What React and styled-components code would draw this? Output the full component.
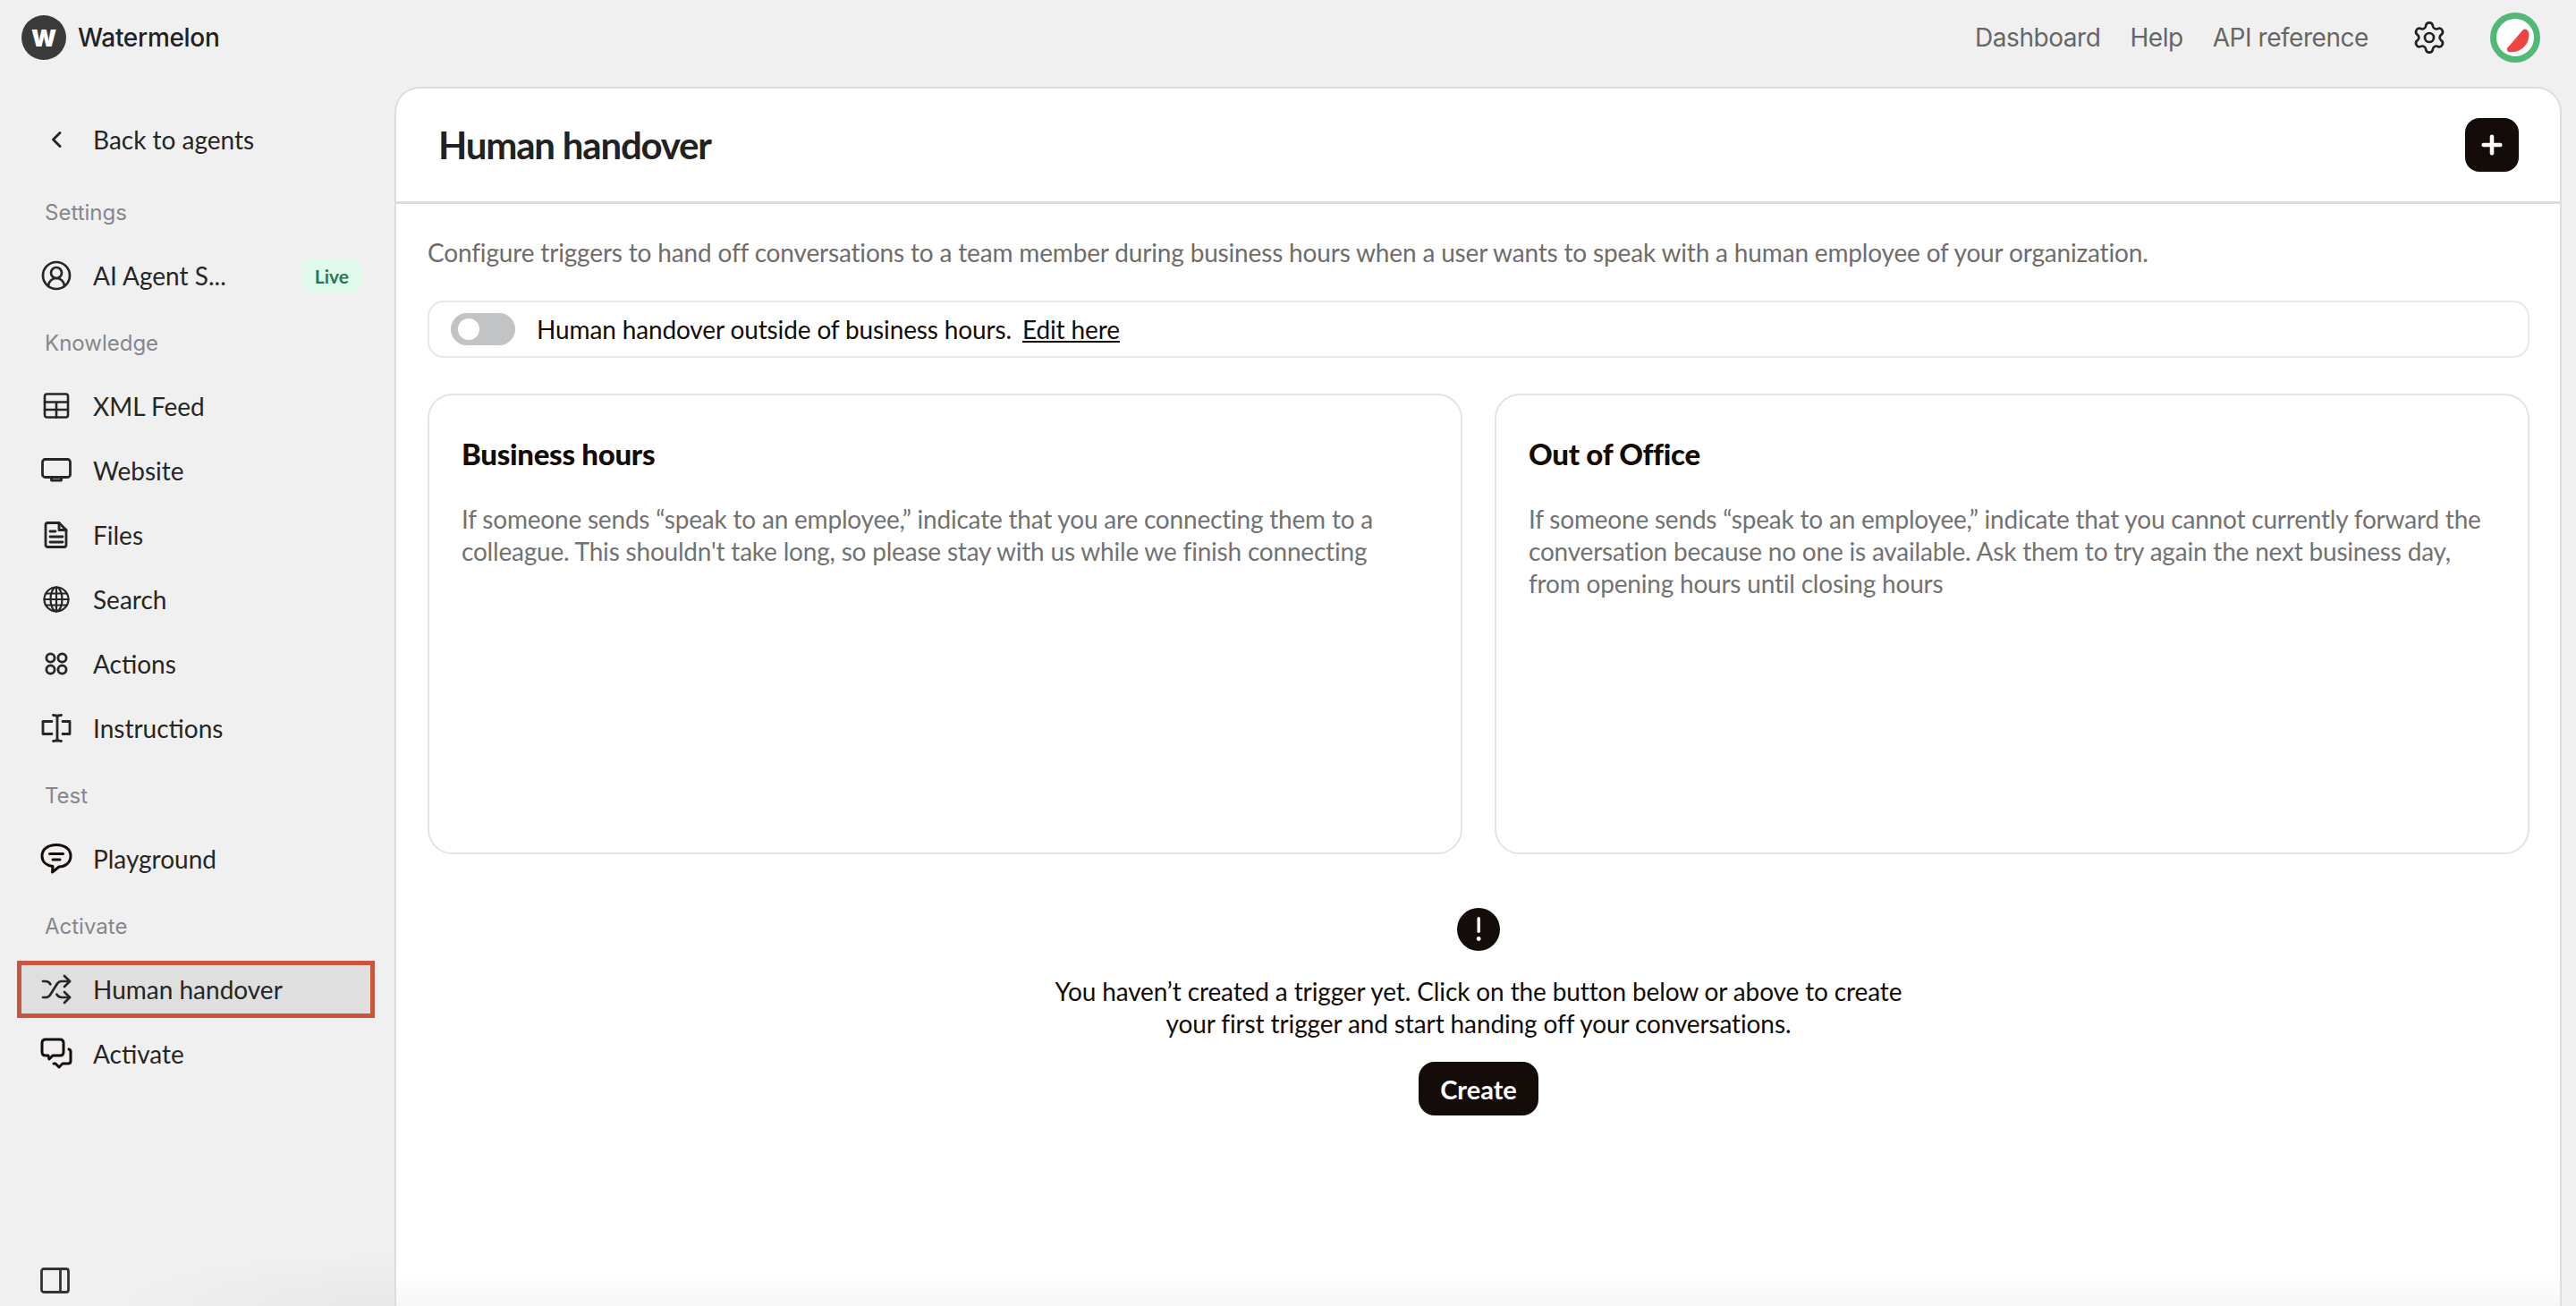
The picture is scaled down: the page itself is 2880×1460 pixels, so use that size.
import React from "react";
import styled, { createGlobalStyle } from "styled-components";
import { CircleUserRound, Settings, Shuffle, Plus } from "lucide-react";

const GlobalStyle = createGlobalStyle`
html, body {
  margin:0;
  padding:0;
  background:#f0f0f0;
}
* { box-sizing:border-box; }
`
const Page = styled.div`
width:2880px;
height:1460px;
display:flex;
flex-direction:column;
overflow:hidden;
background:#f0f0f0;
font-family:Lato, "Liberation Sans", sans-serif;
color:#242424;
`
const TopBar = styled.header`
height:97px;
flex:none;
display:flex;
align-items:center;
justify-content:space-between;
padding:0 40px 13px 24px;
`
const Brand = styled.div`
display:flex;
align-items:center;
gap:13px;
font-family:Inter, sans-serif;
font-size:28px;
font-weight:500;
letter-spacing:-0.3px;
color:#222;
`
const LogoMark = styled.div`
width:50px;
height:50px;
border-radius:50%;
background:#3a3a3a;
color:#fff;
display:flex;
align-items:center;
justify-content:center;
font-family:Inter, sans-serif;
font-size:26px;
font-weight:900;
letter-spacing:0;
`
const TopNav = styled.nav`
display:flex;
align-items:center;
`
const TopLink = styled.a`
font-family:Inter, sans-serif;
font-size:28px;
color:#666;
margin-right:${props => props.$gap}px;
letter-spacing:-0.45px;
`
const Body = styled.div`
flex:1;
display:flex;
min-height:0;
`
const Sidebar = styled.aside`
width:441px;
flex:none;
display:flex;
flex-direction:column;
padding:27px 22px 12px 19px;
background:radial-gradient(ellipse 320px 60px at 100% 100%, #e8e8e8, transparent);
`
const NavGroup = styled.div`
display:flex;
flex-direction:column;
gap:8px;
margin-top:${props => props.$top ?? 28}px;
`
const GroupLabel = styled.div`
height:32px;
line-height:32px;
margin-bottom:14px;
padding-left:31px;
font-family:Inter, sans-serif;
font-size:24px;
color:#85878f;
`
const NavRow = styled.div`
height:64px;
display:flex;
align-items:center;
gap:23px;
padding-left:26px;
padding-right:14px;
font-size:28px;
color:#262626;
background:${props => props.$active ? "#dfdfdf" : "transparent"};
outline:${props => props.$active ? "5px solid #c8553d" : "none"};
outline-offset:-5px;
svg { flex:none; }
`
const NavText = styled.span`
flex:1;
`
const LiveBadge = styled.span`
padding:0 15px;
height:37px;
line-height:37px;
border-radius:12px;
background:#dffaea;
color:#2f7550;
font-size:21px;
font-weight:700;
`
const CollapseButton = styled.div`
margin-top:auto;
padding-left:26px;
height:32px;
display:flex;
align-items:center;
color:#333;
`
const Panel = styled.main`
flex:1;
margin-right:16px;
display:flex;
flex-direction:column;
min-width:0;
background:linear-gradient(to bottom, #fff calc(100% - 36px), #f7f7f7);
border:2px solid #dedede;
border-bottom:none;
border-radius:28px 28px 0 0;
`
const PanelHeader = styled.div`
height:129px;
flex:none;
display:flex;
align-items:center;
justify-content:space-between;
padding:0 46px 0 47px;
border-bottom:3px solid #dcdcdc;
`
const PanelTitle = styled.h1`
margin:0;
font-size:42px;
font-weight:700;
color:#222;
letter-spacing:-1.2px;
`
const IconButton = styled.button`
width:60px;
height:60px;
padding:0;
border:none;
border-radius:16px;
background:#140c09;
color:#fff;
display:flex;
align-items:center;
justify-content:center;
`
const PanelBody = styled.div`
padding:36px 34px 0 35px;
display:flex;
flex-direction:column;
`
const Description = styled.p`
margin:0;
font-size:28px;
line-height:36px;
color:#706c69;
letter-spacing:-0.166px;
`
const ToggleRow = styled.div`
margin-top:36px;
height:64px;
display:flex;
align-items:center;
gap:24px;
padding-left:24px;
border:2px solid #e8e8e8;
border-radius:18px;
font-size:28px;
color:#140c09;
letter-spacing:-0.13px;
`
const Toggle = styled.div`
width:72px;
height:36px;
border-radius:18px;
background:#c2c3c5;
padding:6px 8px;
`
const ToggleKnob = styled.div`
width:24px;
height:24px;
border-radius:50%;
background:#fff;
`
const EditLink = styled.a`
margin-left:12px;
color:#140c09;
text-decoration:underline;
`
const CardGrid = styled.div`
margin-top:40px;
display:grid;
grid-template-columns:1fr 1fr;
gap:36px;
`
const Card = styled.section`
height:515px;
padding:45px 36px;
border:2px solid #e4e4e4;
border-radius:28px;
`
const CardTitle = styled.h2`
margin:0 0 35px;
font-size:33px;
line-height:40px;
font-weight:900;
color:#140c09;
letter-spacing:-0.3px;
`
const CardText = styled.p`
margin:0;
font-size:28px;
line-height:36px;
color:#727272;
letter-spacing:-0.2px;
`
const EmptyState = styled.div`
margin-top:60px;
display:flex;
flex-direction:column;
align-items:center;
`
const EmptyText = styled.p`
margin:27px 0 25px;
font-size:28px;
line-height:36px;
text-align:center;
color:#140c09;
letter-spacing:-0.12px;
`
const CreateButton = styled.button`
width:134px;
height:60px;
border:none;
border-radius:18px;
background:#140c09;
color:#fff;
font-family:Lato, sans-serif;
font-size:29px;
font-weight:700;
`

const LineIcon = ({ width = 36, height = 36, sw = 2.8, color = "currentColor", children }) => (
  <svg width={width} height={height} viewBox={`0 0 ${width} ${height}`} fill="none" stroke={color} strokeWidth={sw} strokeLinecap="round" strokeLinejoin="round">
    {children}
  </svg>
)
const BackIcon = () => (
  <LineIcon sw={3}><path d="M22 10.500 14.500 18 22 25.500" /></LineIcon>
)
const GridIcon = () => (
  <LineIcon sw={2.6}>
    <rect x="5" y="4.500" width="26" height="26" rx="2.500" />
    <path d="M5 13.500h26M5 22h26M18 13.500V30.500" />
  </LineIcon>
)
const MonitorIcon = () => (
  <LineIcon>
    <rect x="2.500" y="5.500" width="31" height="20" rx="3" />
    <path d="M12.500 25.500v3.500h11v-3.500" />
  </LineIcon>
)
const FileIcon = () => (
  <LineIcon>
    <path d="M8 4.500h13l8 8v16.500a2.500 2.500 0 0 1-2.500 2.500h-18.500a2.500 2.500 0 0 1-2-2.500v-22a2.500 2.500 0 0 1 2.500-2.500Z" />
    <path d="M21 4.500v8h8M11 14h6M11 20h14M11 26h14" />
  </LineIcon>
)
const GlobeIcon = () => (
  <LineIcon sw={2.2}>
    <circle cx="18" cy="18" r="13.500" />
    <ellipse cx="18" cy="18" rx="6.500" ry="13.500" />
    <path d="M18 4.500v27M4.500 18h27M6.500 11.500h23M6.500 24.500h23" />
  </LineIcon>
)
const ActionsIcon = () => (
  <LineIcon>
    <circle cx="11.500" cy="11.500" r="4.600" />
    <circle cx="24.500" cy="11.500" r="4.600" />
    <circle cx="11.500" cy="24.500" r="4.600" />
    <circle cx="24.500" cy="24.500" r="4.600" />
  </LineIcon>
)
const InstructionsIcon = () => (
  <LineIcon>
    <path d="M13 10.500H3v14h10M25 10.500h8v14h-8M19 4v28M14.500 3.500c2 0 3.500.5 4.500 1.500 1-1 2.500-1.500 4.500-1.500M14.500 32.500c2 0 3.500-.5 4.500-1.500 1 1 2.500 1.500 4.500 1.500" />
  </LineIcon>
)
const BubbleIcon = () => (
  <LineIcon sw={3} color="#140c09">
    <path d="M18 2.500c9 0 16 4.500 16 12.500 0 8-7 12-13 12l-7.500 6 .5-6.500C7 25.500 2 21.500 2 15 2 7 9 2.500 18 2.500Z" />
    <path d="M10.500 12.500h15M14 19h8" />
  </LineIcon>
)
const ChatsIcon = () => (
  <LineIcon sw={3} color="#140c09">
    <path d="M6 2h16c2.500 0 4 1.500 4 4v10c0 2.500-1.500 4-4 4h-8l-4 4-1-4H6c-2.500 0-4-1.500-4-4V6c0-2.500 1.500-4 4-4Z" />
    <path d="M32 13c1.500.5 2 1.500 2 3v10c0 2-1 3-3 3h-6l-4 4-4-4h-2" />
  </LineIcon>
)
const CollapseIcon = () => (
  <LineIcon width={34} height={30} sw={2.8}>
    <rect x="1.500" y="1.500" width="30" height="26" rx="2.500" />
    <path d="M22.500 1.500v26" />
  </LineIcon>
)
const AlertBadge = () => (
  <svg width="48" height="48" viewBox="0 0 48 48">
    <circle cx="24" cy="24" r="24" fill="#140c09" />
    <rect x="22.500" y="10" width="3.400" height="18" rx="1.700" fill="#fff" />
    <circle cx="24.200" cy="34.500" r="2.400" fill="#fff" />
  </svg>
)
const MelonAvatar = () => (
  <svg width="56" height="56" viewBox="0 0 56 56">
    <circle cx="28" cy="28" r="24.500" fill="#fff" stroke="#52b878" strokeWidth="7" />
    <path d="M19 40 L37 19 Q41 17 43 22 A18.500 18.500 0 0 1 24 44 Q18 45 19 40 Z" fill="#ef4444" />
  </svg>
)

const knowledgeItems = [
  { label: "XML Feed", icon: <GridIcon /> },
  { label: "Website", icon: <MonitorIcon /> },
  { label: "Files", icon: <FileIcon /> },
  { label: "Search", icon: <GlobeIcon /> },
  { label: "Actions", icon: <ActionsIcon /> },
  { label: "Instructions", icon: <InstructionsIcon /> },
]

export default function App() {
  return (
    <>
      <GlobalStyle />
      <Page>
        <TopBar>
          <Brand>
            <LogoMark>W</LogoMark>
            Watermelon
          </Brand>
          <TopNav>
            <TopLink $gap={33}>Dashboard</TopLink>
            <TopLink $gap={33}>Help</TopLink>
            <TopLink $gap={48}>API reference</TopLink>
            <Settings size={40} strokeWidth={1.6} color="#222" style={{ marginRight: 48 }} />
            <MelonAvatar />
          </TopNav>
        </TopBar>
        <Body>
          <Sidebar>
            <NavGroup $top={0}>
              <NavRow>
                <BackIcon />
                <NavText>Back to agents</NavText>
              </NavRow>
            </NavGroup>
            <NavGroup $top={34}>
              <GroupLabel>Settings</GroupLabel>
              <NavRow>
                <CircleUserRound size={36} strokeWidth={1.8} />
                <NavText>AI Agent S...</NavText>
                <LiveBadge>Live</LiveBadge>
              </NavRow>
            </NavGroup>
            <NavGroup>
              <GroupLabel>Knowledge</GroupLabel>
              {knowledgeItems.map(item => (
                <NavRow key={item.label}>
                  {item.icon}
                  <NavText>{item.label}</NavText>
                </NavRow>
              ))}
            </NavGroup>
            <NavGroup>
              <GroupLabel>Test</GroupLabel>
              <NavRow>
                <BubbleIcon />
                <NavText>Playground</NavText>
              </NavRow>
            </NavGroup>
            <NavGroup>
              <GroupLabel>Activate</GroupLabel>
              <NavRow $active>
                <Shuffle size={36} strokeWidth={1.8} />
                <NavText>Human handover</NavText>
              </NavRow>
              <NavRow>
                <ChatsIcon />
                <NavText>Activate</NavText>
              </NavRow>
            </NavGroup>
            <CollapseButton>
              <CollapseIcon />
            </CollapseButton>
          </Sidebar>
          <Panel>
            <PanelHeader>
              <PanelTitle>Human handover</PanelTitle>
              <IconButton><Plus size={32} strokeWidth={3.4} /></IconButton>
            </PanelHeader>
            <PanelBody>
              <Description>Configure triggers to hand off conversations to a team member during business hours when a user wants to speak with a human employee of your organization.</Description>
              <ToggleRow>
                <Toggle><ToggleKnob /></Toggle>
                <span>Human handover outside of business hours.<EditLink>Edit here</EditLink></span>
              </ToggleRow>
              <CardGrid>
                <Card>
                  <CardTitle>Business hours</CardTitle>
                  <CardText>If someone sends “speak to an employee,” indicate that you are connecting them to a colleague. This shouldn't take long, so please stay with us while we finish connecting</CardText>
                </Card>
                <Card>
                  <CardTitle>Out of Office</CardTitle>
                  <CardText>If someone sends “speak to an employee,” indicate that you cannot currently forward the conversation because no one is available. Ask them to try again the next business day, from opening hours until closing hours</CardText>
                </Card>
              </CardGrid>
              <EmptyState>
                <AlertBadge />
                <EmptyText>You haven’t created a trigger yet. Click on the button below or above to create<br />your first trigger and start handing off your conversations.</EmptyText>
                <CreateButton>Create</CreateButton>
              </EmptyState>
            </PanelBody>
          </Panel>
        </Body>
      </Page>
    </>
  )
}
